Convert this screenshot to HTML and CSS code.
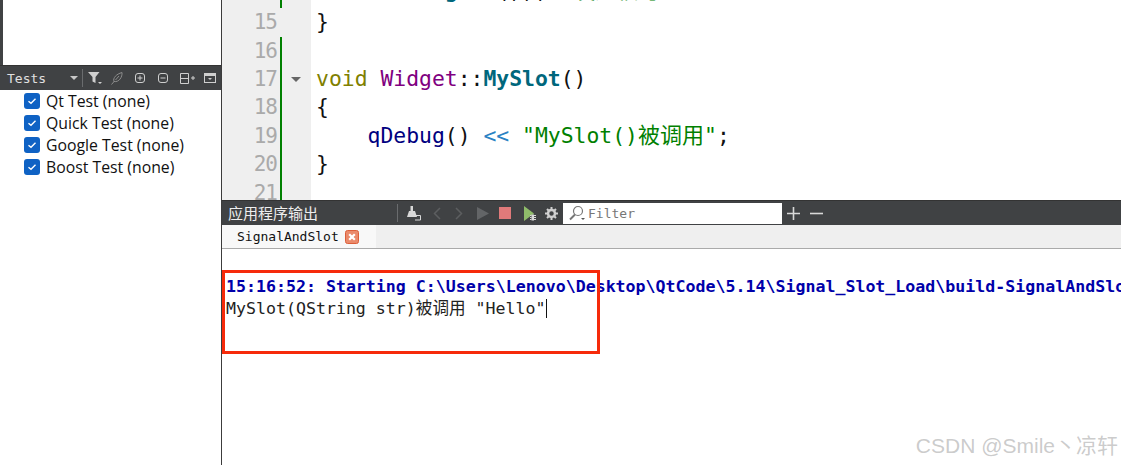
FILE: index.html
```html
<!DOCTYPE html>
<html lang="zh">
<head>
<meta charset="utf-8">
<title>Qt Creator</title>
<link rel="stylesheet" href="styles.css">
</head>
<body>
<div class="app">
  <aside class="side">
    <div class="side-blank"></div>
    <div class="tests-bar">
      <span class="tests-label">Tests</span>
      <svg class="caret" width="8" height="4" viewBox="0 0 8 4"><path d="M0 0h8L4 4z" fill="#c8c8c8"/></svg>
      <span class="vsep vsep-tests"></span>
      <svg class="ic ic-filter" width="14" height="14" viewBox="0 0 14 14"><path d="M0 1h11.500L7.500 6v6L4.500 10.500V6z" fill="#cfcfcf"/><path d="M10 11h4l-2 2z" fill="#cfcfcf"/></svg>
      <svg class="ic ic-leaf" width="12" height="13" viewBox="0 0 12 13"><path d="M.5 12.500L3.500 9M3 9.500C1.500 6 5.500 2 11 .5 11.500 5 8 10.500 3 9.500zM4.500 8L8 4" fill="none" stroke="#8c8c8c"/></svg>
      <svg class="ic ic-plus" width="10" height="10" viewBox="0 0 10 10"><rect x=".5" y=".5" width="9" height="9" rx="2.500" fill="none" stroke="#cfcfcf"/><path d="M2.500 5h5M5 2.500v5" stroke="#cfcfcf"/></svg>
      <svg class="ic ic-minus" width="10" height="10" viewBox="0 0 10 10"><rect x=".5" y=".5" width="9" height="9" rx="2.500" fill="none" stroke="#cfcfcf"/><path d="M2.500 5h5" stroke="#cfcfcf"/></svg>
      <svg class="ic ic-split" width="15" height="11" viewBox="0 0 15 11"><path d="M.5.500h8v10h-8zM.5 5.500h8M11 5h4M13 3v4" fill="none" stroke="#cfcfcf"/></svg>
      <svg class="ic ic-box" width="12" height="10" viewBox="0 0 12 10"><rect x=".5" y=".5" width="11" height="9" fill="none" stroke="#cfcfcf"/><path d="M1 1h10v2H1zM4 5h4L6 7z" fill="#cfcfcf"/></svg>
    </div>
    <ul class="tests">
      <li class="test"><span class="check"><svg width="10" height="8" viewBox="0 0 10 8"><path d="M1.500 4.200L4 6.200 8.500 1.800" fill="none" stroke="#fff" stroke-width="1.400"/></svg></span>Qt Test (none)</li>
      <li class="test"><span class="check"><svg width="10" height="8" viewBox="0 0 10 8"><path d="M1.500 4.200L4 6.200 8.500 1.800" fill="none" stroke="#fff" stroke-width="1.400"/></svg></span>Quick Test (none)</li>
      <li class="test"><span class="check"><svg width="10" height="8" viewBox="0 0 10 8"><path d="M1.500 4.200L4 6.200 8.500 1.800" fill="none" stroke="#fff" stroke-width="1.400"/></svg></span>Google Test (none)</li>
      <li class="test"><span class="check"><svg width="10" height="8" viewBox="0 0 10 8"><path d="M1.500 4.200L4 6.200 8.500 1.800" fill="none" stroke="#fff" stroke-width="1.400"/></svg></span>Boost Test (none)</li>
    </ul>
  </aside>
  <main class="main">
    <section class="editor">
      <div class="code">
        <div class="line"><span class="num"></span><span class="fold"></span><span class="src src-top">        <span class="fn">Signal</span>());<span class="str">//<span class="cjk">发送信号</span></span></span></div>
        <div class="line"><span class="num">15</span><span class="fold fold-clean"></span><span class="src">}</span></div>
        <div class="line"><span class="num">16</span><span class="fold"></span><span class="src"></span></div>
        <div class="line"><span class="num">17</span><span class="fold"><svg width="10" height="5" viewBox="0 0 10 5"><path d="M0 0h10L5 5z" fill="#666"/></svg></span><span class="src"><span class="kw">void</span> <span class="cls">Widget</span>::<span class="fn">MySlot</span>()</span></div>
        <div class="line"><span class="num">18</span><span class="fold"></span><span class="src">{</span></div>
        <div class="line"><span class="num">19</span><span class="fold"></span><span class="src">    <span class="call">qDebug</span>() <span class="op">&lt;&lt;</span> <span class="str">"MySlot()<span class="cjk">被调用</span>"</span>;</span></div>
        <div class="line"><span class="num">20</span><span class="fold"></span><span class="src">}</span></div>
        <div class="line"><span class="num">21</span><span class="fold"></span><span class="src"></span></div>
      </div>
    </section>
    <section class="output">
      <div class="out-bar">
        <span class="out-title">应用程序输出</span>
        <span class="vsep"></span>
        <svg class="tool t-broom" width="15" height="15" viewBox="0 0 15 15"><path d="M4.500 0h2.500v5h2l2 6H1l2-6h1.500z" fill="#d8d8d8"/><path d="M10 9.500h4.500V14H9" fill="none" stroke="#d8d8d8"/></svg>
        <svg class="tool t-prev" width="8" height="13" viewBox="0 0 8 13"><path d="M7 1L1.500 6.500 7 12" fill="none" stroke="#5c5e60" stroke-width="1.500"/></svg>
        <svg class="tool t-next" width="8" height="13" viewBox="0 0 8 13"><path d="M1 1l5.500 5.500L1 12" fill="none" stroke="#5c5e60" stroke-width="1.500"/></svg>
        <svg class="tool t-play" width="12" height="13" viewBox="0 0 12 13"><path d="M0 0l12 6.500L0 13z" fill="#636567"/></svg>
        <span class="stop"></span>
        <svg class="tool t-run" width="14" height="15" viewBox="0 0 14 15"><path d="M1 0l10 7.500L1 15z" fill="#8fbc6a"/><path d="M7 9.500h1.500M7 11.500h1.500M7 13.500h1.500M11 9.500h2M11 11.500h2M11 13.500h2" stroke="#d8d8d8"/><rect x="8.500" y="8.500" width="2.500" height="6" fill="#d8d8d8"/></svg>
        <svg class="tool t-gear" width="13" height="13" viewBox="0 0 13 13"><circle cx="6.500" cy="6.500" r="3.500" fill="none" stroke="#d0d0d0" stroke-width="2.500"/><path d="M6.500 0v2.500M6.500 10.500V13M0 6.500h2.500M10.500 6.500H13M2 2l1.800 1.800M9.200 9.200L11 11M2 11l1.800-1.800M9.200 3.800L11 2" stroke="#d0d0d0" stroke-width="2"/></svg>
        <div class="filter">
          <svg width="16" height="16" viewBox="0 0 16 16"><circle cx="9" cy="6" r="4.500" fill="none" stroke="#777" stroke-width="1.200"/><path d="M6 9.500L1 14.500" stroke="#777" stroke-width="2"/><path d="M12 13h4l-2 2z" fill="#555"/></svg>
          <span class="filter-text">Filter</span>
        </div>
        <svg class="tool t-add" width="13" height="13" viewBox="0 0 13 13"><path d="M6.500 0v13M0 6.500h13" stroke="#d8d8d8" stroke-width="1.600"/></svg>
        <svg class="tool t-sub" width="13" height="13" viewBox="0 0 13 13"><path d="M0 6.500h13" stroke="#d8d8d8" stroke-width="1.600"/></svg>
      </div>
      <div class="tab-bar">
        <div class="tab">
          <span class="tab-name">SignalAndSlot</span>
          <svg class="tab-close" width="14" height="14" viewBox="0 0 14 14"><rect x=".5" y=".5" width="13" height="13" rx="2" fill="#ea8a6b" stroke="#dc5f3a"/><path d="M4.200 4.200l5.600 5.600M9.800 4.200l-5.600 5.600" stroke="#fff" stroke-width="2.200"/></svg>
        </div>
      </div>
      <div class="out-body">
        <div class="out-line start">15:16:52: Starting C:\Users\Lenovo\Desktop\QtCode\5.14\Signal_Slot_Load\build-SignalAndSlot-Desktop_Qt</div>
        <div class="out-line">MySlot(QString str)被调用 "Hello"<span class="cursor"></span></div>
        <div class="mark"></div>
        <div class="water">CSDN @Smile丶凉轩</div>
      </div>
    </section>
  </main>
</div>
</body>
</html>
```
FILE: styles.css
```css
* { box-sizing: border-box; }
html, body { margin: 0; padding: 0; }
body { width: 1121px; height: 465px; overflow: hidden; background: #fff; font-family: "Liberation Sans", sans-serif; }
.app { display: flex; height: 465px; }
.side { width: 222px; flex: none; border-right: 1px solid #3c3c3c; display: flex; flex-direction: column; }
.side-blank { height: 65px; border-left: 3px solid #404244; }
.tests-bar { height: 25px; background: #404244; border-top: 1px solid #333; display: flex; align-items: center; padding-left: 7px; }
.tests-label { width: 63px; font: 13px "DejaVu Sans Mono", monospace; color: #e0e0e0; }
.caret { flex: none; }
.vsep { width: 1px; height: 18px; background: #6a6c6e; flex: none; }
.vsep-tests { margin-left: 4px; }
.ic { flex: none; }
.ic-filter { margin-left: 5px; }
.ic-leaf { margin-left: 9px; }
.ic-plus { margin-left: 12px; }
.ic-minus { margin-left: 13px; }
.ic-split { margin-left: 12px; }
.ic-box { margin-left: 9px; }
.tests { list-style: none; margin: 0; padding: 0 0 0 24px; }
.test { height: 22px; display: flex; align-items: center; font: 15.8px "Open Sans", "Noto Sans", sans-serif; color: #111; }
.check { width: 16px; height: 16px; border-radius: 3px; background: #0f62c4; display: flex; align-items: center; justify-content: center; margin-right: 6px; }
.main { flex: 1; min-width: 0; display: flex; flex-direction: column; }
.editor { height: 200px; overflow: hidden; background: #fff; }
.code { margin-top: -20.3px; }
.line { display: flex; height: 28.45px; font: 21.4px/28.45px "DejaVu Sans Mono", "Noto Sans CJK SC", monospace; color: #111; }
.num { width: 58px; flex: none; background: #efefef; color: #aaa; text-align: right; padding-right: 3px; font: 21px/28.45px "DejaVu Sans Mono", monospace; letter-spacing: -1px; }
.fold { width: 31px; flex: none; background: #efefef; border-left: 2px solid #008000; display: flex; align-items: center; padding-left: 9px; }
.fold-clean { border-left-color: #efefef; }
.src { white-space: pre; padding-left: 5px; }
.src-top { margin-top: -3px; }
.cjk { font-family: "Noto Sans CJK SC", sans-serif; font-size: 22px; line-height: 0; }
.kw { color: #808000; }
.cls { color: #800080; }
.fn { color: #00677c; font-weight: bold; }
.call { color: #000080; }
.op { color: #2a82c4; }
.str { color: #008000; }
.output { flex: 1; display: flex; flex-direction: column; min-height: 0; }
.out-bar { height: 25px; flex: none; background: #404244; border-top: 1px solid #333; display: flex; align-items: center; padding-left: 6px; }
.out-title { width: 169px; color: #eee; font: 15px/20px "Noto Sans CJK SC", sans-serif; }
.tool { flex: none; }
.t-broom { margin-left: 8px; }
.t-prev { margin-left: 12px; }
.t-next { margin-left: 14px; }
.t-play { margin-left: 14px; }
.stop { width: 12px; height: 12px; background: #e07a7a; margin-left: 10px; flex: none; }
.t-run { margin-left: 12px; }
.t-gear { margin-left: 8px; }
.filter { width: 219px; height: 21px; background: #fff; margin-left: 5px; display: flex; align-items: center; padding-left: 6px; flex: none; }
.filter-text { font: 13px "DejaVu Sans Mono", monospace; color: #777; margin-left: 3px; }
.t-add { margin-left: 5px; }
.t-sub { margin-left: 10px; }
.tab-bar { height: 24px; flex: none; background: #efefef; border-bottom: 1px solid #aaa; }
.tab { width: 154px; height: 23px; background: #f8f8f8; display: flex; align-items: center; padding-left: 15px; }
.tab-name { font: 13px "DejaVu Sans Mono", monospace; color: #111; width: 108px; }
.tab-close { flex: none; }
.out-body { position: relative; flex: 1; overflow: hidden; padding: 27px 0 0 4px; background: #fff; font: 16.6px/22px "DejaVu Sans Mono", "Noto Sans CJK SC", monospace; color: #222; }
.out-line { white-space: pre; height: 22px; }
.start { color: #0000aa; font-weight: bold; }
.cursor { display: inline-block; width: 1px; height: 19px; background: #111; vertical-align: -4px; }
.mark { position: absolute; left: 0; top: 21px; width: 378px; height: 84px; border: 3px solid #f62a0a; }
.water { position: absolute; right: 3px; bottom: 6px; font: 21px "Liberation Sans", "Noto Sans CJK SC", sans-serif; color: rgba(160,160,160,.55); }
```
